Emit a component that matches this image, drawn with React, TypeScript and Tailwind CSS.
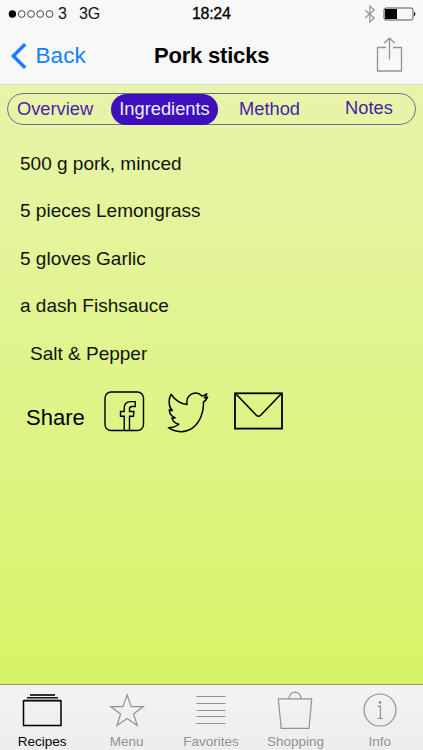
import type { ReactNode } from "react";

const segments = [
  { label: "Overview", className: "w-[103px] pr-[9px] text-[#4a1fa8]" },
  { label: "Ingredients", className: "w-[107px] h-[31px] rounded-full bg-[#3e10bd] text-[#f1edf7]" },
  { label: "Method", className: "w-[103px] text-[#4a1fa8]" },
  { label: "Notes", className: "w-[93px] pb-px pl-[3px] text-[#4a1fa8]" },
];

const ingredients = [
  "500 g pork, minced",
  "5 pieces Lemongrass",
  "5 gloves Garlic",
  "a dash Fishsauce",
  "Salt & Pepper",
];

function StatusBar() {
  return (
    <div className="flex h-7 items-center text-base leading-none text-[#111]">
      <div className="flex w-[192px] items-center pl-2">
        <svg width="47" height="10" viewBox="0 0 47 10" fill="none" stroke="#333" strokeWidth="0.9">
          <circle cx="4.4" cy="5" r="3.7" fill="#000" stroke="none" />
          <circle cx="13.7" cy="5" r="3.4" />
          <circle cx="23" cy="5" r="3.4" />
          <circle cx="32.2" cy="5" r="3.4" />
          <circle cx="41.5" cy="5" r="3.4" />
        </svg>
        <span className="ml-[3px]">3</span>
        <span className="ml-[12px] tracking-[-0.1px]">3G</span>
      </div>
      <span className="text-[16px] tracking-[-0.3px] text-black [-webkit-text-stroke:0.3px_black]">18:24</span>
      <div className="ml-auto flex items-center pr-[6px]">
        <svg width="12" height="18" viewBox="0 0 12 18" fill="none" stroke="#9a9a9a" strokeWidth="1.3">
          <path d="M1.2 5.2l9 7.7L5.8 17V1l4.4 4.1-9 7.7" />
        </svg>
        <svg className="ml-[7px]" width="34" height="14" viewBox="0 0 34 14" fill="none">
          <rect x="1" y="1" width="29" height="12" rx="2" stroke="#555" />
          <rect x="2" y="2" width="12" height="10" fill="#000" />
          <path d="M31 5c1.8.3 1.8 3.7 0 4z" fill="#111" />
        </svg>
      </div>
    </div>
  );
}

function NavBar() {
  return (
    <div className="flex h-14 items-center">
      <button className="flex w-[154px] items-center pl-[10px] text-[#167efb]">
        <svg width="17" height="26" viewBox="0 0 17 26" fill="none" stroke="currentColor" strokeWidth="3.4">
          <path d="M15.2 1.2L3.300 13l11.900 11.800" />
        </svg>
        <span className="ml-[8.500px] text-[22.500px] leading-none tracking-[0.100px]">Back</span>
      </button>
      <h1 className="text-[22px] font-bold leading-none tracking-[-0.2px] text-black">Pork sticks</h1>
      <svg className="mr-5 mb-[5px] ml-auto" width="27" height="36" viewBox="0 0 27 36" fill="none" stroke="#929292" strokeWidth="1.3">
        <path d="M10 11.500H1.500v23.500h24v-23.500H17M13.500 23.500V2M8.300 7.300l5.200-5.200 5.200 5.200" />
      </svg>
    </div>
  );
}

function ShareRow() {
  return (
    <div className="flex items-start pt-[13px] pl-[26px] text-black">
      <span className="w-[78px] pt-[16px] text-[22px] leading-none">Share</span>
      {/* Facebook */}
      <svg width="41" height="42" viewBox="0 0 41 42" fill="none" stroke="currentColor" strokeWidth="1.4">
        <rect x="1" y="1" width="38.5" height="38.5" rx="6" />
        <path d="M20.200 39.500V25.200h-3.700v-4.700h3.700v-3.200c0-4.300 2.300-6.700 6.300-6.700h4.700v4.900h-3.200c-1.700 0-2.500.8-2.500 2.400v2.600h4.400l-.5 4.700h-3.900v14.300" />
      </svg>
      {/* Twitter */}
      <svg className="ml-[22px]" width="42" height="42" viewBox="0 0 42 42" fill="none" stroke="currentColor" strokeWidth="1.500" strokeLinejoin="round">
        <path d="M4 3.300C8 9 13.300 12.900 20 13.600C19.300 8.600 21 5 24.500 3.200C28.200 1.300 32.300 2.100 35 4.900C36.700 4.600 38.400 3.900 39.800 2.900C39.400 4.500 38.600 5.700 37.400 6.800C38.500 6.800 39.600 6.500 40.600 6.100C39.700 8.100 38.300 9.900 36.400 11.100C37 20.500 33.300 31 26 36.700C18.700 42.300 8.700 41.700 1.400 36.700C5.500 36.700 9 35.600 11.800 33.200C8.200 32.400 5.800 30.200 4.900 27.100C6.100 27.300 7.100 27.200 8.100 26.800C4.500 25.400 2.400 22.400 2.300 18.700C3.400 19.200 4.400 19.500 5.400 19.500C1.800 16.400 1 8.900 4 3.300z" />
      </svg>
      {/* Mail */}
      <svg className="ml-[24px]" width="50" height="42" viewBox="0 0 50 42" fill="none" stroke="currentColor" strokeWidth="1.800">
        <rect x="2" y="2.300" width="47" height="35.300" />
        <path d="M3 3l20.300 21.200c1.400 1.400 3 1.400 4.400 0L48 3" strokeWidth="1.600" />
      </svg>
    </div>
  );
}

function TabItem({ label, active, children }: { label: string; active?: boolean; children: ReactNode }) {
  return (
    <div className={`flex flex-1 flex-col items-center ${active ? "text-black" : "text-[#929292]"}`}>
      <svg width="44" height="44" viewBox="0 0 44 44" fill="none" stroke="currentColor" strokeWidth="1.2">
        {children}
      </svg>
      <span className="mt-[5px] text-[13.5px] leading-[15px]">{label}</span>
    </div>
  );
}

function TabBar() {
  return (
    <nav className="flex h-[66px] border-t border-[#969872] bg-linear-to-b from-[#f3f3f3] to-[#ededed] pr-px">
      <TabItem label="Recipes" active>
        <path d="M10 10h25" strokeWidth="1.6" />
        <path d="M7 12.800h31" strokeWidth="1.4" />
        <path d="M4 14.500h37" stroke="#aaa" />
        <rect x="3.500" y="15.800" width="37.500" height="24.700" strokeWidth="1.500" />
      </TabItem>
      <TabItem label="Menu">
        <path d="M22.100 9.800l4.100 11.800h12.200l-9.800 7.400 3.600 11.600-10.100-7.100-10.100 7.100 3.600-11.600-9.800-7.400H18z" />
      </TabItem>
      <TabItem label="Favorites">
        <path d="M7.500 11.500h29M7.500 18.500h29M7.500 25.500h29M7.500 31.500h29M7.500 38.500h29" />
      </TabItem>
      <TabItem label="Shopping">
        <path d="M5.300 13.800h33.400l-2.700 29.500H8.200zM16 13.800c0-8.800 12-8.800 12 0" />
      </TabItem>
      <TabItem label="Info">
        <circle cx="22" cy="25" r="16" />
        <path d="M19.700 21.200h2.700v12.300M19.500 33.500h5.500" />
        <circle cx="22" cy="17.500" r="1.400" fill="currentColor" stroke="none" />
      </TabItem>
    </nav>
  );
}

export default function App() {
  return (
    <div className="flex h-[750px] w-[423px] flex-col overflow-hidden font-['Liberation_Sans',Arial,sans-serif] antialiased">
      <header className="h-[85px] border-b border-[#d9d9cf] bg-[#f8f8f8]">
        <StatusBar />
        <NavBar />
      </header>

      <main className="flex-1 bg-linear-to-b from-[#e8f4a9] to-[#d6f466] pt-2">
        <div className="mx-[7px] flex h-[32px] items-center rounded-full border border-[#746d91] text-[18.300px] leading-none">
          {segments.map((segment) => (
            <button key={segment.label} className={`flex items-center justify-center ${segment.className}`}>
              {segment.label}
            </button>
          ))}
        </div>

        <ul className="pt-[15px] pl-5 text-[19px] text-[#10130a]">
          {ingredients.map((item) => (
            <li key={item} className="flex h-[47.500px] items-center last:pl-[10px]">
              {item}
            </li>
          ))}
        </ul>

        <ShareRow />
      </main>

      <TabBar />
    </div>
  );
}
